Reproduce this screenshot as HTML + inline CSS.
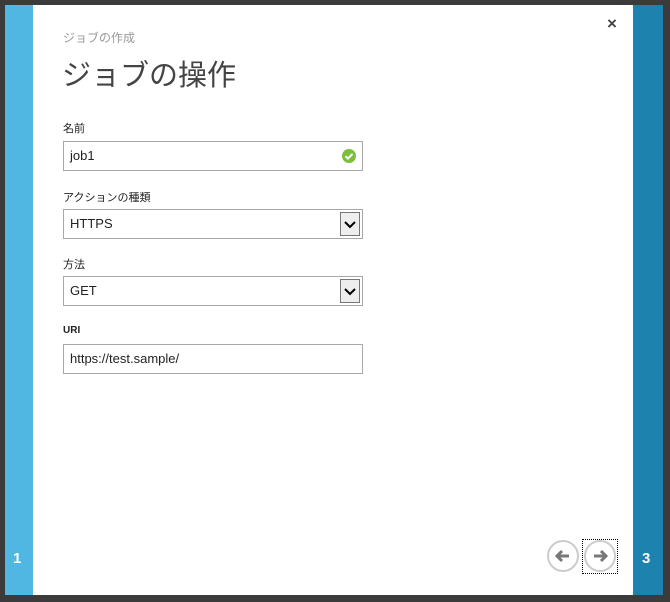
<!DOCTYPE html><html><head><style>
body{margin:0;width:670px;height:602px;background:#3b3b3b;position:relative;overflow:hidden;font-family:"Liberation Sans","Noto Sans CJK JP",sans-serif}
.l{position:absolute;left:5px;top:5px;width:28px;height:590px;background:#4fb7e1}
.r{position:absolute;left:633px;top:5px;width:30px;height:590px;background:#1e82ae}
.w{position:absolute;left:33px;top:5px;width:600px;height:590px;background:#fff}
.n{position:absolute;color:#fff;font-weight:bold;font-size:15px;top:550px}
.t{position:absolute;left:63px;color:#999;font-size:12px;top:29px}
h1{position:absolute;left:62px;top:52px;margin:0;font-weight:normal;font-size:29px;color:#444}
.lb{position:absolute;left:63px;font-size:11px;color:#222}
.f{position:absolute;left:63px;border:1px solid #a8a8a8;font-size:13px;line-height:28px;padding-left:6px;box-sizing:border-box;width:300px;height:30px;color:#222}
.dd{position:absolute;right:2px;top:2px;width:18px;height:22px;border:1px solid #777;background:#eee}
.x{position:absolute;left:607px;top:14px;font-size:17px;color:#444;font-weight:bold}
.c{position:absolute;top:540px;width:32px;height:32px;border:2px solid #ccc;border-radius:50%;box-sizing:border-box}
</style></head><body>
<div class="l"></div><div class="w"></div><div class="r"></div>
<div class="n" style="left:13px">1</div><div class="n" style="left:642px">3</div>
<div class="x">×</div>
<div class="t">ジョブの作成</div>
<h1>ジョブの操作</h1>
<div class="lb" style="top:120px">名前</div>
<div class="f" style="top:141px">job1<svg style="position:absolute;right:6px;top:7px" width="14" height="14"><circle cx="7" cy="7" r="7" fill="#7cbf3a"/><path d="M3.5 7.2l2.4 2.4 4.6-4.6" stroke="#fff" stroke-width="2" fill="none"/></svg></div>
<div class="lb" style="top:189px">アクションの種類</div>
<div class="f" style="top:209px">HTTPS<div class="dd"><svg width="18" height="22"><path d="M4 9l5 5 5-5" stroke="#000" stroke-width="2" fill="none"/></svg></div></div>
<div class="lb" style="top:256px">方法</div>
<div class="f" style="top:276px">GET<div class="dd"><svg width="18" height="22"><path d="M4 9l5 5 5-5" stroke="#000" stroke-width="2" fill="none"/></svg></div></div>
<div class="lb" style="top:325px;font-weight:bold;font-size:10px">URI</div>
<div class="f" style="top:344px">https://test.sample/</div>
<div class="c" style="left:547px"><svg width="28" height="28"><path d="M8 14h12M13 9l-5 5 5 5" stroke="#777" stroke-width="3" fill="none"/></svg></div>
<div style="position:absolute;left:582px;top:539px;width:36px;height:35px;border:1px dotted #000;box-sizing:border-box"></div>
<div class="c" style="left:584px"><svg width="28" height="28"><path d="M8 14h12M15 9l5 5-5 5" stroke="#777" stroke-width="3" fill="none"/></svg></div>
</body></html>
